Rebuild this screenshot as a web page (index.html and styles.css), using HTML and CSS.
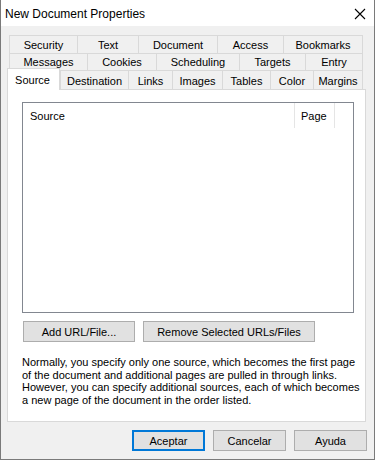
FILE: index.html
```html
<!DOCTYPE html>
<html lang="en">
<head>
    <meta charset="UTF-8">
    <meta name="viewport" content="width=device-width, initial-scale=1.0">
    <title>New Document Properties</title>
    <link rel="stylesheet" href="styles.css">
</head>
<body>
    <div class="window">
        <div class="titlebar">
            <span class="title">New Document Properties</span>
            <svg class="close" width="12" height="12" viewBox="0 0 12 12">
                <path d="M1 1 L11 11 M11 1 L1 11" stroke="#000" stroke-width="1.1" fill="none"/>
            </svg>
        </div>

        <div class="client">
            <div class="tabs">
                <div class="tab-row row1">
                    <div class="tab">Security</div>
                    <div class="tab">Text</div>
                    <div class="tab">Document</div>
                    <div class="tab">Access</div>
                    <div class="tab last">Bookmarks</div>
                </div>
                <div class="tab-row row2">
                    <div class="tab">Messages</div>
                    <div class="tab">Cookies</div>
                    <div class="tab">Scheduling</div>
                    <div class="tab">Targets</div>
                    <div class="tab last">Entry</div>
                </div>
                <div class="tab-row row3">
                    <div class="tab active">Source</div>
                    <div class="tab">Destination</div>
                    <div class="tab">Links</div>
                    <div class="tab">Images</div>
                    <div class="tab">Tables</div>
                    <div class="tab">Color</div>
                    <div class="tab last">Margins</div>
                </div>
            </div>

            <div class="panel">
                <div class="list">
                    <div class="list-head">
                        <div class="col col-source">Source</div>
                        <div class="col col-page">Page</div>
                    </div>
                </div>

                <div class="actions">
                    <button class="btn btn-add">Add URL/File...</button>
                    <button class="btn btn-remove">Remove Selected URLs/Files</button>
                </div>

                <p class="note">
                    Normally, you specify only one source, which becomes the first page<br>
                    of the document and additional pages are pulled in through links.<br>
                    However, you can specify additional sources, each of which becomes<br>
                    a new page of the document in the order listed.
                </p>
            </div>

            <div class="footer">
                <button class="btn btn-footer default">Aceptar</button>
                <button class="btn btn-footer">Cancelar</button>
                <button class="btn btn-footer">Ayuda</button>
            </div>
        </div>
    </div>
</body>
</html>
```

FILE: styles.css
```css
* {
    box-sizing: border-box;
}

body {
    margin: 0;
    font-family: 'Liberation Sans', Arial, sans-serif;
    color: #000;
    background-color: #fff;
}

.window {
    width: 375px;
    height: 460px;
    border: 1px solid #7a7a7a;
    border-top: none;
    display: flex;
    flex-direction: column;
}

.titlebar {
    height: 26px;
    background-color: #fff;
    display: flex;
    align-items: center;
    justify-content: space-between;
    padding: 0 8px 0 4px;
}

.title {
    font-size: 12px;
    margin-top: 1px;
}

.close {
    display: block;
    margin-top: 2px;
}

.client {
    flex: 1;
    background-color: #f0f0f0;
    padding: 9px 0 0 6px;
}

/* tabs */
.tab-row {
    display: grid;
    font-size: 11px;
}

.row1 {
    grid-template-columns: 68px 61px 79px 66px 80px;
    height: 18px;
    margin-left: 2px;
}

.row2 {
    grid-template-columns: 78px 69px 83px 66px 58px;
    height: 17px;
    margin-left: 2px;
}

.row3 {
    grid-template-columns: 53px 68px 44px 50px 48px 43px 50px;
    height: 19px;
}

.tab {
    display: flex;
    align-items: center;
    justify-content: center;
    border-top: 1px solid #d9d9d9;
    border-left: 1px solid #d9d9d9;
    background-color: #f0f0f0;
    white-space: nowrap;
}

.tab.last {
    border-right: 1px solid #d9d9d9;
}

.row3 .tab {
    padding-top: 2px;
}

.tab.active {
    position: relative;
    z-index: 1;
    background-color: #fff;
    border-right: 1px solid #d9d9d9;
    margin-top: -2px;
    margin-bottom: -1px;
    padding-top: 0;
    padding-right: 2px;
}

.panel {
    width: 359px;
    height: 333px;
    background-color: #fff;
    border: 1px solid #d9d9d9;
    padding: 12px 0 0 14px;
}

/* list view */
.list {
    width: 332px;
    height: 211px;
    border: 1px solid #828790;
    background-color: #fff;
}

.list-head {
    display: flex;
    height: 25px;
    font-size: 11px;
}

.col {
    display: flex;
    align-items: center;
}

.col-source {
    width: 272px;
    padding-left: 7px;
    border-right: 1px solid #e5e5e5;
}

.col-page {
    width: 40px;
    padding-left: 6px;
    border-right: 1px solid #e5e5e5;
}

/* buttons */
.btn {
    height: 21px;
    padding: 0;
    margin: 0;
    font-family: 'Liberation Sans', Arial, sans-serif;
    font-size: 11px;
    color: #000;
    background-color: #e1e1e1;
    border: 1px solid #adadad;
}

.actions {
    display: flex;
    gap: 8px;
    margin: 8px 0 0 1px;
}

.btn-add {
    width: 112px;
}

.btn-remove {
    width: 172px;
}

.note {
    margin: 14px 0 0;
    font-size: 11px;
    line-height: 12.5px;
    white-space: nowrap;
}

.footer {
    display: flex;
    gap: 8px;
    margin: 8px 0 0 125px;
}

.btn-footer {
    width: 73px;
}

.btn-footer.default {
    border: 2px solid #0078d7;
}
```
